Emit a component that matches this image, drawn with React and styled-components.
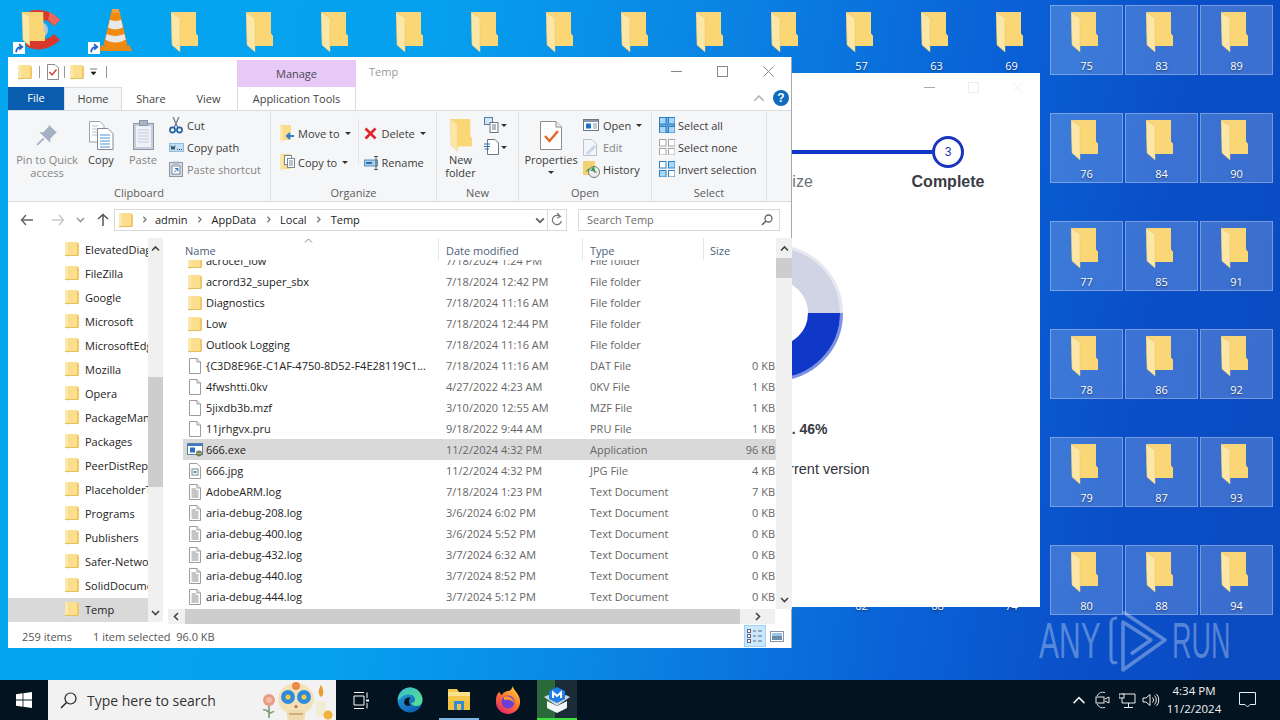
import React from 'react';
import styled, { createGlobalStyle } from 'styled-components';

const GlobalStyle = createGlobalStyle`
    html, body {
        margin: 0;
        padding: 0;
        background: #0a6ad0;
    }
    * {
        box-sizing: border-box;
    }
`;

const UI_FONT = `"Open Sans", "Noto Sans", sans-serif`;

const Screen = styled.div`
    width: 1280px;
    height: 720px;
    display: flex;
    flex-direction: column;
    overflow: hidden;
    font-family: ${UI_FONT};
    font-size: 11px;
`;

const Desktop = styled.div`
    position: relative;
    flex: 1;
    overflow: hidden;
    background: linear-gradient(99deg, #05a6f0 0%, #06a0ee 32%, #0a84e4 52%, #0a62d6 72%, #0a4fc8 86%, #0b4ac0 100%);
`;

/* desktop items sit on a free canvas */
const IconCell = styled.div`
    position: absolute;
    left: ${(p) => p.$x}px;
    top: ${(p) => p.$y}px;
    width: 73px;
    height: 70px;
    padding-top: 6px;
    display: flex;
    flex-direction: column;
    align-items: center;
    color: #fff;
    background: ${(p) => (p.$selected ? 'rgba(255, 255, 255, 0.2)' : 'transparent')};
    border: 1px solid ${(p) => (p.$selected ? 'rgba(255, 255, 255, 0.3)' : 'transparent')};
`;

const IconArt = styled.span`
    margin-right: 4px;
    line-height: 0;
`;

const IconLabel = styled.span`
    margin-top: 7px;
    line-height: 14px;
    font-size: 11px;
    text-shadow: 0 1px 2px rgba(0, 0, 0, 0.5);
`;

const CanvasIcon = styled.div`
    position: absolute;
    left: ${(p) => p.$x}px;
    top: ${(p) => p.$y}px;
    line-height: 0;
`;

/* installer window behind explorer */
const InstallerWindow = styled.div`
    position: absolute;
    left: 510px;
    top: 73px;
    width: 530px;
    height: 534px;
    background: #fff;
    display: flex;
    flex-direction: column;
    align-items: center;
    font-family: "Liberation Sans", Arial, sans-serif;
    color: #3b3b45;
`;

const InstallerTitle = styled.div`
    align-self: stretch;
    height: 28px;
    padding-right: 17px;
    display: flex;
    justify-content: flex-end;
    align-items: center;
    gap: 33px;
`;

const StepTrack = styled.div`
    margin-top: 35px;
    width: 378px;
    display: flex;
    align-items: center;
`;

const StepCircle = styled.div`
    width: 32px;
    height: 32px;
    border-radius: 50%;
    border: 3px solid #1936bd;
    color: #1936bd;
    display: flex;
    align-items: center;
    justify-content: center;
    font-size: 12px;
`;

const StepLine = styled.div`
    flex: 1;
    height: 4px;
    background: #0f37c8;
`;

const StepLabels = styled.div`
    margin-top: 4px;
    width: 519px;
    display: grid;
    grid-template-columns: repeat(3, 1fr);
`;

const StepLabel = styled.div`
    text-align: center;
    font-size: 16px;
    line-height: 20px;
    font-weight: ${(p) => (p.$active ? 700 : 400)};
    color: ${(p) => (p.$active ? '#3b3b45' : '#70707a')};
`;

const Donut = styled.svg`
    margin-top: 51px;
    display: block;
`;

const ProgressText = styled.div`
    margin-top: 36px;
    font-size: 14px;
    line-height: 20px;
    font-weight: 700;
`;

const StatusText = styled.div`
    margin-top: 20px;
    font-size: 14.5px;
    line-height: 20px;
    color: #33333b;
`;

/* explorer window */
const ExplorerWindow = styled.div`
    position: absolute;
    left: 8px;
    top: 57px;
    width: 784px;
    height: 591px;
    background: #fff;
    border-right: 1px solid #a8a8a8;
    display: flex;
    flex-direction: column;
    color: #333;
`;

const TitleBar = styled.div`
    height: 30px;
    display: flex;
    align-items: center;
    position: relative;
`;

const QuickBar = styled.div`
    width: 229px;
    padding-left: 10px;
    display: flex;
    align-items: center;
    height: 100%;
`;

const QuickSep = styled.div`
    width: 1px;
    height: 12px;
    background: #9a9a9a;
    margin: 0 ${(p) => p.$gap || 11}px;
`;

const QuickMenu = styled.svg`
    margin-left: 6px;
`;

const ManageTab = styled.div`
    width: 119px;
    height: 27px;
    margin-top: 3px;
    background: #e7c8f6;
    text-align: center;
    line-height: 28px;
    color: #4a4a55;
`;

const TitleText = styled.div`
    margin-left: 13px;
    margin-top: -1px;
    color: #9a9a9a;
`;

const WindowControls = styled.div`
    margin-left: auto;
    width: 138px;
    height: 100%;
    display: grid;
    grid-template-columns: 46px 46px 46px;
    align-items: center;
    justify-items: center;
    margin-top: -2px;
`;

const TabBar = styled.div`
    height: 23px;
    display: flex;
    align-items: stretch;
`;

const FileTab = styled.div`
    width: 56px;
    background: #0a5dae;
    color: #fff;
    text-align: center;
    line-height: 22px;
`;

const Tab = styled.div`
    width: ${(p) => p.$w}px;
    text-align: center;
    line-height: 22px;
    color: #444;
    background: ${(p) => (p.$active ? '#f5f6f7' : 'transparent')};
    border: 1px solid ${(p) => (p.$active ? '#dadbdc' : 'transparent')};
    border-bottom: none;
    border-left-color: ${(p) => (p.$edged ? '#dadbdc' : undefined)};
    border-right-color: ${(p) => (p.$edged ? '#dadbdc' : undefined)};
`;

const TabEnd = styled.div`
    margin-left: auto;
    width: 38px;
    display: flex;
    align-items: center;
    justify-content: space-between;
    padding: 0 1px 2px 0;
`;

const Ribbon = styled.div`
    height: 92px;
    background: #f5f6f7;
    border-top: 1px solid #dadbdc;
    border-bottom: 1px solid #dadbdc;
    display: flex;
`;

const Group = styled.div`
    width: ${(p) => p.$w}px;
    border-right: 1px solid #dfe1e3;
    display: flex;
    flex-direction: column;
    margin-top: 1px;
`;

const GroupBody = styled.div`
    flex: 1;
    display: flex;
    padding-left: ${(p) => p.$pl || 0}px;
`;

const GroupLabel = styled.div`
    height: 16px;
    text-align: center;
    line-height: 16px;
    color: #5c5c5c;
`;

const LargeButton = styled.div`
    width: ${(p) => p.$w}px;
    padding-top: 5px;
    display: flex;
    flex-direction: column;
    align-items: center;
    line-height: 13px;
    text-align: center;
    color: ${(p) => (p.$disabled ? '#858585' : '#3c3c3c')};
`;

const LargeIconBox = styled.div`
    height: 36px;
    display: flex;
    align-items: center;
    justify-content: center;
`;

const SmallColumn = styled.div`
    margin-left: ${(p) => p.$ml || 0}px;
    padding-top: ${(p) => p.$pt ?? 2}px;
    display: flex;
    flex-direction: column;
`;

const SmallButton = styled.div`
    height: ${(p) => p.$h || 22}px;
    display: flex;
    align-items: center;
    color: ${(p) => (p.$disabled ? '#858585' : '#3c3c3c')};
    white-space: nowrap;
`;

const SmallIconBox = styled.span`
    width: ${(p) => p.$w || 18}px;
    flex: none;
    display: flex;
    align-items: center;
`;

const Caret = styled.span`
    display: inline-block;
    margin-left: ${(p) => p.$ml ?? 5}px;
    margin-top: ${(p) => p.$mt ?? 0}px;
    border-left: 3px solid transparent;
    border-right: 3px solid transparent;
    border-top: 3px solid #333;
`;

const ColumnRule = styled.div`
    width: 1px;
    margin: 7px 5px 20px 7px;
    background: #e2e4e6;
`;

const AddressRow = styled.div`
    height: 36px;
    display: flex;
    align-items: center;
    padding-bottom: 1px;
`;

const NavArrows = styled.div`
    width: 106px;
    height: 100%;
    display: grid;
    grid-template-columns: 38px 23px 22px 23px;
    align-items: center;
    justify-items: center;
`;

const AddressBox = styled.div`
    width: 434px;
    height: 22px;
    border: 1px solid #d9d9d9;
    display: flex;
    align-items: center;
    padding-left: 4px;
    color: #222;
`;

const Crumb = styled.span`
    display: inline-block;
`;

const CrumbSep = styled.span`
    width: ${(p) => p.$w || 24}px;
    display: flex;
    justify-content: center;
`;

const AddressDrop = styled.span`
    margin-left: auto;
    margin-right: 2px;
    line-height: 0;
`;

const RefreshBox = styled.div`
    width: 19px;
    height: 22px;
    border: 1px solid #d9d9d9;
    border-left: none;
    display: flex;
    align-items: center;
    justify-content: center;
`;

const SearchBox = styled.div`
    margin-left: 11px;
    width: 202px;
    height: 22px;
    border: 1px solid #d9d9d9;
    padding: 0 6px 0 8px;
    display: flex;
    align-items: center;
    justify-content: space-between;
    color: #6d6d6d;
`;

const Body = styled.div`
    flex: 1;
    display: flex;
    min-height: 0;
`;

const NavPane = styled.div`
    width: 140px;
    height: 384px;
    overflow: hidden;
`;

const NavItem = styled.div`
    height: 24px;
    display: flex;
    align-items: center;
    padding: 0 0 2px 57px;
    gap: 6px;
    white-space: nowrap;
    color: #222;
    background: ${(p) => (p.$selected ? '#d9d9d9' : 'transparent')};

    svg {
        flex: none;
    }
`;

const VScroll = styled.div`
    width: ${(p) => p.$w}px;
    height: ${(p) => p.$h}px;
    background: #f0f0f0;
    display: flex;
    flex-direction: column;
    flex: none;
`;

const ScrollArrow = styled.div`
    height: ${(p) => p.$h || 20}px;
    display: flex;
    align-items: center;
    justify-content: center;
    flex: none;
    margin-top: ${(p) => (p.$end ? 'auto' : 0)};
`;

const ScrollThumb = styled.div`
    height: ${(p) => p.$h}px;
    margin-top: ${(p) => p.$top}px;
    background: #cdcdcd;
`;

const Content = styled.div`
    flex: 1;
    display: flex;
    flex-direction: column;
    min-width: 0;
`;

const ListRow = styled.div`
    display: flex;
    height: 371px;
`;

const ListPane = styled.div`
    width: 613px;
    display: flex;
    flex-direction: column;
`;

const HeaderRow = styled.div`
    height: 22px;
    display: grid;
    grid-template-columns: 276px 144px 121px 72px;
    position: relative;
    color: #4c6078;
    background: #fff;
    z-index: 1;
`;

const HeaderCell = styled.div`
    padding: 4px 0 0 ${(p) => p.$pl}px;
    border-right: 1px solid ${(p) => (p.$last ? 'transparent' : '#e5e5e5')};
    line-height: 18px;
`;

const SortMark = styled.span`
    position: absolute;
    left: 141px;
    top: -2px;
    line-height: 0;
`;

const FileList = styled.div`
    flex: 1;
    overflow: hidden;
    padding-left: 20px;
`;

const FileScroller = styled.div`
    margin-top: -10px;
`;

const FileRow = styled.div`
    height: 21px;
    display: grid;
    grid-template-columns: 263px 144px 114px 72px;
    align-items: center;
    white-space: nowrap;
    color: #666;
    background: ${(p) => (p.$selected ? '#d9d9d9' : 'transparent')};
`;

const NameCell = styled.div`
    display: flex;
    align-items: center;
    gap: 3px;
    padding-left: 4px;
    color: #222;
    overflow: hidden;
`;

const TypeIconBox = styled.span`
    width: 16px;
    display: flex;
    justify-content: center;
    flex: none;
`;

const SizeCell = styled.div`
    text-align: right;
    padding-right: 1px;
`;

const HScroll = styled.div`
    height: 15px;
    margin-left: 5px;
    margin-right: 16px;
    background: #f0f0f0;
    display: flex;
`;

const HArrow = styled.div`
    width: ${(p) => p.$w}px;
    display: flex;
    align-items: center;
    justify-content: center;
    flex: none;
`;

const HThumb = styled.div`
    flex: 1;
    background: #cdcdcd;
`;

const StatusBar = styled.div`
    height: 24px;
    display: flex;
    align-items: center;
    padding-left: 14px;
    color: #555;
`;

const StatusItem = styled.span`
    width: ${(p) => p.$w}px;
    white-space: pre;
`;

const ViewButtons = styled.div`
    margin-left: auto;
    height: 100%;
    display: flex;
    align-items: center;
    padding-right: 6px;
    gap: 3px;
`;

const ViewButton = styled.div`
    width: ${(p) => p.$w}px;
    height: 22px;
    display: flex;
    align-items: center;
    justify-content: center;
    background: ${(p) => (p.$active ? '#cce8ff' : 'transparent')};
    border: 1px solid ${(p) => (p.$active ? '#99d1ff' : 'transparent')};
`;

/* watermark */
const Watermark = styled.div`
    position: absolute;
    left: 1039px;
    top: 608px;
    width: 195px;
    height: 66px;
    color: rgba(255, 255, 255, 0.33);
`;

const MarkWord = styled.span`
    position: absolute;
    top: 0;
    left: ${(p) => p.$x}px;
    font-family: "Liberation Sans", Arial, sans-serif;
    font-size: 50px;
    line-height: 66px;
    transform-origin: left center;
    transform: scaleX(${(p) => p.$sx});
`;

const MarkLogo = styled.svg`
    position: absolute;
    left: 70px;
    top: 0;
`;

/* taskbar */
const Taskbar = styled.div`
    height: 40px;
    background: #03131f;
    display: flex;
    align-items: stretch;
    flex: none;
    color: #fff;
`;

const StartButton = styled.div`
    width: 48px;
    display: flex;
    align-items: center;
    justify-content: center;
`;

const TaskSearch = styled.div`
    width: 288px;
    background: #f2f2f2;
    display: flex;
    align-items: center;
    padding-left: 12px;
    color: #333;
    font-size: 14px;
    overflow: hidden;
`;

const SearchText = styled.span`
    margin-left: 10px;
`;

const SearchDoodle = styled.svg`
    margin-left: auto;
    flex: none;
`;

const TaskApps = styled.div`
    margin-left: 5px;
    display: flex;
    gap: 9px;
`;

const TaskApp = styled.div`
    width: 40px;
    display: flex;
    align-items: center;
    justify-content: center;
    background: ${(p) => (p.$bg ? p.$bg : 'transparent')};
    box-shadow: ${(p) => (p.$line ? `inset 0 -2px 0 ${p.$line}` : 'none')};
`;

const Tray = styled.div`
    margin-left: auto;
    display: flex;
    align-items: center;
    padding-right: 10px;
`;

const TrayIcon = styled.div`
    width: 24px;
    display: flex;
    justify-content: center;
`;

const Clock = styled.div`
    width: 62px;
    text-align: center;
    font-size: 11.5px;
    line-height: 18px;
    color: #f2f2f2;
`;

const NoticeBox = styled.div`
    width: 45px;
    display: flex;
    justify-content: center;
`;

/* drawings */
const Folder = ({ w = 27, h = 40 }) => (
    <svg width={w} height={h} viewBox="0 0 27 40">
        <path d="M0 0H25V21.5L27 24V34H8V6Z" fill="#f9d67a" />
        <path d="M9 6H25V21.5L27 24V34H9Z" fill="#fbd673" opacity="0.7" />
        <path d="M0 0L9 6V40L1 33Z" fill="#fce7a6" />
        <path d="M0 0L9 6V40L1 33Z" fill="none" stroke="#eac777" strokeWidth="0.5" />
    </svg>
);

const SmallFolder = () => (
    <svg width="14" height="16" viewBox="0 0 14 16">
        <path d="M0 1H12V14H0Z" fill="#fcdf8e" />
        <path d="M12 1V14H14V3Z" fill="#f0c869" />
        <path d="M0 1V15L3 16V1Z" fill="#fbe8ad" />
        <path d="M0 14.5H13.5" stroke="#e4bd5d" />
    </svg>
);

const DocIcon = ({ lines }) => (
    <svg width="12" height="16" viewBox="0 0 12 16">
        <path d="M.5.5H8L11.5 4V15.5H.5Z" fill="#fff" stroke="#9c9c9c" />
        <path d="M8 .5V4H11.5" fill="#eee" stroke="#9c9c9c" />
        {lines && <path d="M2.5 5H7M2.5 7H9.5M2.5 9H9.5M2.5 11H9.5M2.5 13H9.5" stroke="#8c8c8c" />}
    </svg>
);

const JpgIcon = () => (
    <svg width="12" height="16" viewBox="0 0 12 16">
        <path d="M.5.5H8L11.5 4V15.5H.5Z" fill="#fff" stroke="#9c9c9c" />
        <rect x="3" y="6" width="6" height="6" fill="#fff" stroke="#6f8c99" />
        <rect x="4.5" y="8" width="3" height="2" fill="#6f8c99" />
    </svg>
);

const ExeIcon = () => (
    <svg width="16" height="14" viewBox="0 0 16 14">
        <rect x=".5" y=".5" width="15" height="11" fill="#fff" stroke="#5f7f9f" />
        <rect x="1" y="1" width="14" height="2" fill="#3a78c8" />
        <rect x="3" y="4.5" width="5" height="5" fill="#2d6fc4" />
        <circle cx="12" cy="10.5" r="3" fill="#69806a" />
        <path d="M10 10.5H14" stroke="#d9b23c" />
    </svg>
);

const Chevron = ({ dir = 'up', size = 9, color = '#444', width = 1.6 }) => {
    const d = {
        up: 'M1 6.5L4.5 3L8 6.5',
        down: 'M1 3L4.5 6.5L8 3',
        left: 'M6 1L2.5 4.5L6 8',
        right: 'M3 1L6.5 4.5L3 8',
    }[dir];
    return (
        <svg width={size} height={size} viewBox="0 0 9 9">
            <path d={d} fill="none" stroke={color} strokeWidth={width} />
        </svg>
    );
};

const PinIcon = () => (
    <svg width="22" height="22" viewBox="0 0 20 20">
        <path d="M12 1L19 8L17 9L13 13.5L13 17L3 7.5L6.5 7.5L11 3Z" fill="#a4b1c4" />
        <path d="M7 13L1 19" stroke="#a4b1c4" strokeWidth="1.6" />
    </svg>
);

const CopyIcon = () => (
    <svg width="25" height="29" viewBox="0 0 25 29">
        <path d="M.5.5H11L15 4.5V21H.5Z" fill="#fff" stroke="#9aa3ad" />
        <path d="M3 5H9M3 8H12M3 11H12M3 14H12" stroke="#b9c0c8" />
        <path d="M8.5 7.5H19L24 12.5V28.5H8.5Z" fill="#fff" stroke="#7f8a96" />
        <path d="M11 14H21M11 17H21M11 20H21M11 23H21M11 26H21" stroke="#4f94d4" />
    </svg>
);

const PasteIcon = () => (
    <svg width="21" height="30" viewBox="0 0 21 30">
        <rect x=".5" y="3.5" width="20" height="26" fill="#c6cedb" stroke="#8b97a8" />
        <rect x="3" y="6" width="15" height="21" fill="#eef1f7" />
        <path d="M5 10H16M5 13H16M5 16H16M5 19H16M5 22H16" stroke="#c3cbdb" />
        <rect x="6.5" y=".5" width="8" height="5" fill="#aab4c4" stroke="#8b97a8" />
    </svg>
);

const CutIcon = () => (
    <svg width="14" height="17" viewBox="0 0 14 17">
        <path d="M4 0L9 11M10 0L5 11" stroke="#6d7a88" strokeWidth="1.3" />
        <circle cx="3.5" cy="13" r="2.6" fill="none" stroke="#1e5fa8" strokeWidth="1.6" />
        <circle cx="10.5" cy="13" r="2.6" fill="none" stroke="#1e5fa8" strokeWidth="1.6" />
    </svg>
);

const CopyPathIcon = () => (
    <svg width="15" height="9" viewBox="0 0 15 9">
        <rect x=".5" y=".5" width="14" height="8" fill="#bfe0f5" stroke="#93bcdc" />
        <path d="M2 2.5L3 6.5L4 3.5L5 6.5L6 2.5M8 6.5H9M10 6.5H11M12 6.5H13" fill="none" stroke="#345" />
    </svg>
);

const PasteShortcutIcon = () => (
    <svg width="14" height="16" viewBox="0 0 14 16">
        <rect x=".5" y="1.5" width="13" height="14" fill="#d5dbe5" stroke="#8b97a8" />
        <rect x="4" y=".5" width="6" height="3" fill="#aab4c4" />
        <rect x="3" y="5" width="8" height="8" fill="#fff" stroke="#7b8899" />
        <path d="M5.5 11L8.5 8M6 7.5H9V10.5" fill="none" stroke="#2b6cb0" />
    </svg>
);

const MoveToIcon = () => (
    <svg width="15" height="17" viewBox="0 0 15 17">
        <path d="M0 0H11V15H0Z" fill="#fbdc88" />
        <path d="M0 0L3 1.5V17L0 15Z" fill="#fbe8ad" />
        <path d="M14 11H7M10 8L7 11L10 14" fill="none" stroke="#2f7dd0" strokeWidth="2" />
    </svg>
);

const CopyToIcon = () => (
    <svg width="15" height="17" viewBox="0 0 15 17">
        <path d="M0 0H11V15H0Z" fill="#fbdc88" />
        <path d="M0 0L3 1.5V17L0 15Z" fill="#fbe8ad" />
        <rect x="4.5" y="1.5" width="7" height="9" fill="#fff" stroke="#7b8899" />
        <rect x="7.5" y="4.5" width="7" height="9" fill="#fff" stroke="#7b8899" />
        <path d="M9 7H13M9 9H13M9 11H13" stroke="#7b8899" />
    </svg>
);

const DeleteIcon = () => (
    <svg width="13" height="13" viewBox="0 0 13 13">
        <path d="M1.5 1.5L11.5 11.5M11.5 1.5L1.5 11.5" stroke="#e0242b" strokeWidth="2.6" />
    </svg>
);

const RenameIcon = () => (
    <svg width="16" height="14" viewBox="0 0 16 14">
        <rect x=".5" y="4" width="13" height="6" fill="#a9cdec" stroke="#5b8dbd" />
        <rect x="2" y="6" width="6" height="2" fill="#2f6cad" />
        <path d="M10 .5H14M12 .5V13.5M10 13.5H14" stroke="#555" fill="none" />
    </svg>
);

const NewItemIcon = ({ kind }) => (
    <svg width="15" height="16" viewBox="0 0 15 16">
        {kind === 'copy' ? (
            <>
                <rect x=".5" y=".5" width="8" height="7" fill="#d5e6f5" stroke="#4d7ea8" />
                <rect x="6" y="5.5" width="8" height="10" fill="#fff" stroke="#6a7785" />
                <path d="M8 8H12M8 10H12M8 12H12" stroke="#6a7785" />
            </>
        ) : (
            <>
                <path d="M3.5.5H11L14.5 4V15.5H3.5Z" fill="#fff" stroke="#6a7785" />
                <path d="M0 5H6M0 7.5H6M1 10H5" stroke="#2e73b8" strokeWidth="1.2" />
            </>
        )}
    </svg>
);

const PropertiesIcon = () => (
    <svg width="22" height="29" viewBox="0 0 22 29">
        <path d="M.5.5H16L21.5 6V28.5H.5Z" fill="#fff" stroke="#8c8c8c" />
        <path d="M16 .5V6H21.5" fill="#f0f0f0" stroke="#8c8c8c" />
        <path d="M5 15L9.5 20L18 10" fill="none" stroke="#e0662a" strokeWidth="2.4" />
    </svg>
);

const OpenIcon = () => (
    <svg width="16" height="12" viewBox="0 0 16 12">
        <rect x=".5" y=".5" width="15" height="11" fill="#fff" stroke="#6a7785" />
        <rect x="1" y="1" width="14" height="2" fill="#8b97a8" />
        <rect x="3" y="4.5" width="5" height="5" fill="#1f6fc4" />
        <path d="M10 5H14M10 7H14M10 9H14" stroke="#8b97a8" />
    </svg>
);

const EditIcon = () => (
    <svg width="15" height="17" viewBox="0 0 15 17">
        <path d="M.5.5H9L13.5 5V16.5H.5Z" fill="#f2f5fa" stroke="#b8c2d0" />
        <path d="M3 14L11 6L13 8L5 16Z" fill="#c8d6e8" />
    </svg>
);

const HistoryIcon = () => (
    <svg width="17" height="17" viewBox="0 0 17 17">
        <rect x="0" y="0" width="12" height="14" fill="#f3d36f" />
        <circle cx="11" cy="11" r="5.5" fill="#eee" stroke="#777" />
        <path d="M11 8V11H13.5" fill="none" stroke="#555" />
        <path d="M3 11A4 4 0 0 1 9 8L7 10L12 10L11 5L9 7" fill="#35a043" />
    </svg>
);

const SelectIcon = ({ kind }) => {
    const filled = { all: [1, 1, 1, 1], none: [0, 0, 0, 0], invert: [0, 1, 1, 0] }[kind];
    const cells = [[0, 0], [9, 0], [0, 9], [9, 9]];
    return (
        <svg width="16" height="16" viewBox="0 0 16 16">
            {kind === 'all' && <rect x=".5" y=".5" width="15" height="15" fill="#a8d6f7" stroke="#2f7fc4" />}
            {cells.map(([x, y], i) => (
                <rect
                    key={i}
                    x={x + 0.5}
                    y={y + 0.5}
                    width="6.5"
                    height="6.5"
                    fill={filled[i] ? '#a8d6f7' : '#fff'}
                    stroke={kind === 'none' ? '#a6a6a6' : '#2f7fc4'}
                />
            ))}
            {kind === 'all' && <path d="M8 1V15M1 8H15" stroke="#2f7fc4" />}
        </svg>
    );
};

const PropsQuickIcon = () => (
    <svg width="12" height="16" viewBox="0 0 12 16">
        <path d="M.5.5H8L11.5 4V15.5H.5Z" fill="#fff" stroke="#8c8c8c" />
        <path d="M2.5 8L5 11L9.5 5.5" fill="none" stroke="#d8392b" strokeWidth="1.4" />
    </svg>
);

const CCleanerIcon = () => (
    <svg width="42" height="42" viewBox="0 0 42 42">
        <circle cx="20" cy="21" r="8" fill="#b9c6d2" />
        <path d="M8 3C18 -1 30 1 40 11L34 17C28 10 20 9 14 12L8 30C16 33 28 32 34 25L40 31C30 41 16 43 6 37Z" fill="#d8382c" />
        <path d="M30 3C34 5 37 8 40 11L34 17C32 14 30 12 28 11Z" fill="#e9695c" />
    </svg>
);

const VlcIcon = () => (
    <svg width="33" height="44" viewBox="0 0 42 46" preserveAspectRatio="none">
        <path d="M3 39H39L42 45H0Z" fill="#e88a16" />
        <path d="M16 3L26 3L36 38C30 43 12 43 6 38Z" fill="#f28a10" />
        <path d="M14 12C18 14 24 14 28 12L30.5 20C25 23 17 23 11.5 20Z" fill="#e8e8e8" />
        <path d="M10 27C16 30 26 30 32 27L34 33C27 37 15 37 8 33Z" fill="#e8e8e8" />
        <path d="M17 1H25L26 5H16Z" fill="#f6a23c" />
    </svg>
);

const ShortcutBadge = () => (
    <svg width="12" height="12" viewBox="0 0 11 11">
        <rect width="11" height="11" fill="#fff" />
        <path d="M3 9.5C3 6 5 4.5 7 4.5M5.5 2L8.5 4.5L5.5 7" fill="none" stroke="#1c62c8" strokeWidth="1.6" />
    </svg>
);

const WindowsLogo = () => (
    <svg width="16" height="16" viewBox="0 0 16 16">
        <path d="M0 2.2L6.6 1.3V7.6H0ZM7.4 1.2L16 0V7.6H7.4ZM0 8.4H6.6V14.7L0 13.8ZM7.4 8.4H16V16L7.4 14.8Z" fill="#fff" />
    </svg>
);

const SearchGlass = () => (
    <svg width="17" height="17" viewBox="0 0 17 17">
        <circle cx="10.5" cy="6.5" r="5.5" fill="none" stroke="#222" strokeWidth="1.2" />
        <path d="M6.5 10.5L1 16" stroke="#222" strokeWidth="1.4" />
    </svg>
);

const Doodle = () => (
    <SearchDoodle width="76" height="40" viewBox="0 0 76 40">
        <path d="M9 24V38M9 32C6 30 4 29 3 30M9 34C12 32 13 31 14 32" stroke="#7d9a72" strokeWidth="1.6" fill="none" />
        <circle cx="9" cy="20" r="6" fill="#e89a84" />
        <circle cx="9" cy="20" r="3" fill="#f4bba8" />
        <ellipse cx="36" cy="19" rx="18" ry="16" fill="#f3e2b8" />
        <rect x="27" y="30" width="18" height="10" rx="3" fill="#eedcb0" />
        <circle cx="28" cy="17" r="7" fill="#2e8bdc" />
        <circle cx="44" cy="17" r="7" fill="#2e8bdc" />
        <circle cx="28" cy="17" r="2.6" fill="#f2c744" />
        <circle cx="44" cy="17" r="2.6" fill="#f2c744" />
        <circle cx="36" cy="6" r="4" fill="#ea8a46" />
        <path d="M35 25H37L38 28H34Z" fill="#c77b5e" />
        <path d="M29 34H43" stroke="#c79a66" strokeWidth="1.4" />
        <rect x="56" y="21" width="10" height="16" rx="1" fill="#f3ecd4" />
        <path d="M61 5C64 10 64 15 61 17C58 15 58 10 61 5Z" fill="#ec9a2e" />
        <circle cx="68" cy="35" r="4.5" fill="#efb23a" />
    </SearchDoodle>
);

const TaskViewIcon = () => (
    <svg width="17" height="17" viewBox="0 0 17 17">
        <path d="M1 .5H11M1 16.5H11M1 4H11V13H1ZM14 .5V6M14 11V16.5" fill="none" stroke="#fff" />
        <rect x="13" y="7.5" width="3" height="2" fill="#fff" />
    </svg>
);

const EdgeIcon = () => (
    <svg width="26" height="26" viewBox="0 0 24 24">
        <defs>
            <linearGradient id="edgeBlue" x1="0" y1="0" x2="0.7" y2="1">
                <stop offset="0" stopColor="#2ba8e0" />
                <stop offset="1" stopColor="#0a5fb0" />
            </linearGradient>
            <linearGradient id="edgeGreen" x1="0" y1="0" x2="1" y2="1">
                <stop offset="0" stopColor="#37c0c8" />
                <stop offset="1" stopColor="#5fe08c" />
            </linearGradient>
        </defs>
        <circle cx="12" cy="12" r="11.5" fill="url(#edgeBlue)" />
        <path d="M12 .5A11.5 11.5 0 0 1 23.5 12C23.5 16 20 18 17 17.5C14 17 13 15.5 13.5 14.5C16 14.5 17 12.5 16.5 10.5C15.5 7 12 6.5 9.5 7C6 7.5 2.5 10 1 13C.5 6 6 .5 12 .5Z" fill="url(#edgeGreen)" />
        <path d="M6.5 14C7 10 10.5 9 12.5 10C11 11.5 10.5 14.5 12.5 17C9.5 18 7 17 6.5 14Z" fill="#03131f" />
    </svg>
);

const ExplorerIcon = () => (
    <svg width="24" height="22" viewBox="0 0 24 22">
        <path d="M1 0H10L12 3H23V20H1Z" fill="#f5c84c" />
        <rect x="1" y="3" width="22" height="4" fill="#f9e08c" />
        <rect x="1" y="12" width="22" height="9" fill="#f0c040" />
        <path d="M7 12H17V21H14V15H10V21H7Z" fill="#2f8ad8" />
    </svg>
);

const FirefoxIcon = () => (
    <svg width="26" height="28" viewBox="0 0 26 28">
        <defs>
            <linearGradient id="foxBody" x1="0.8" y1="0" x2="0.2" y2="1">
                <stop offset="0" stopColor="#ffd23c" />
                <stop offset="0.45" stopColor="#ff7a2e" />
                <stop offset="1" stopColor="#e0226a" />
            </linearGradient>
        </defs>
        <path d="M18 0C18 4 24 7 25 14C26 22 20 28 13 28C6 28 0 22 1 14C1 10 3 6 5 6C5 8 6 9 7 9C8 6 12 5 13 5C15 5 17 3 18 0Z" fill="url(#foxBody)" />
        <circle cx="13" cy="16" r="6.5" fill="#6a3fd4" />
        <path d="M9 11C13 9 19 12 19 17C17 14 13 13 9 14Z" fill="#ff9a2e" />
    </svg>
);

const BoxAppIcon = () => (
    <svg width="26" height="26" viewBox="0 0 26 26">
        <path d="M3 14L13 19L23 14V21L13 26L3 21Z" fill="#f2f4f6" />
        <path d="M0 10L4 8L13 13L22 8L26 10L13 19Z" fill="#cfd6dc" />
        <path d="M13 0L21 4V12L13 16L5 12V4Z" fill="#1f7ee8" />
        <path d="M9 11V5.5L13 9L17 5.5V11" fill="none" stroke="#fff" strokeWidth="2" />
    </svg>
);

const MeetIcon = () => (
    <svg width="16" height="18" viewBox="0 0 16 18">
        <path d="M2 5A7 7 0 0 1 10 1.5M2 13A7 7 0 0 0 10 16.5" fill="none" stroke="#ddd" />
        <rect x="1" y="6" width="8" height="6" fill="none" stroke="#eee" />
        <path d="M10 8L14 6V12L10 10" fill="none" stroke="#eee" />
    </svg>
);

const NetworkIcon = () => (
    <svg width="17" height="15" viewBox="0 0 17 15">
        <path d="M3 1H16V10H3ZM9.5 10V14M5 14.5H14" fill="none" stroke="#eee" />
        <rect x="0" y="1" width="5" height="4" fill="#03131f" stroke="#eee" />
    </svg>
);

const SoundIcon = () => (
    <svg width="18" height="14" viewBox="0 0 18 14">
        <path d="M1 5H4L8 1.5V12.5L4 9H1Z" fill="none" stroke="#eee" />
        <path d="M10.5 4.5A3.5 3.5 0 0 1 10.5 9.5M12.5 2.5A6.5 6.5 0 0 1 12.5 11.5M14.5 1A9 9 0 0 1 14.5 13" fill="none" stroke="#eee" />
    </svg>
);

const NoticeIcon = () => (
    <svg width="17" height="16" viewBox="0 0 17 16">
        <path d="M.5.5H16.5V12.5H11L8.5 15L6 12.5H.5Z" fill="none" stroke="#eee" />
    </svg>
);

const topColumns = Array.from({ length: 12 }, (_, i) => ({ x: 150 + i * 75, label: String(3 + i * 6) }));

/* last row of the underlying columns, only its labels peek out below the installer */
const peekColumns = [
    { x: 825, label: '62' },
    { x: 901, label: '68' },
    { x: 975, label: '74' },
];

const selectedIcons = [
    [1050, [75, 76, 77, 78, 79, 80]],
    [1125, [83, 84, 85, 86, 87, 88]],
    [1200, [89, 90, 91, 92, 93, 94]],
];

const navFolders = [
    'ElevatedDiagnostics', 'FileZilla', 'Google', 'Microsoft', 'MicrosoftEdgeBackups', 'Mozilla', 'Opera',
    'PackageManagement', 'Packages', 'PeerDistRepub', 'PlaceholderTileLogo', 'Programs', 'Publishers',
    'Safer-Networking', 'SolidDocuments', 'Temp',
];

const files = [
    { name: 'acrocef_low', date: '7/18/2024 1:24 PM', type: 'File folder', kind: 'folder' },
    { name: 'acrord32_super_sbx', date: '7/18/2024 12:42 PM', type: 'File folder', kind: 'folder' },
    { name: 'Diagnostics', date: '7/18/2024 11:16 AM', type: 'File folder', kind: 'folder' },
    { name: 'Low', date: '7/18/2024 12:44 PM', type: 'File folder', kind: 'folder' },
    { name: 'Outlook Logging', date: '7/18/2024 11:16 AM', type: 'File folder', kind: 'folder' },
    { name: '{C3D8E96E-C1AF-4750-8D52-F4E28119C1...', date: '7/18/2024 11:16 AM', type: 'DAT File', size: '0 KB', kind: 'doc' },
    { name: '4fwshtti.0kv', date: '4/27/2022 4:23 AM', type: '0KV File', size: '1 KB', kind: 'doc' },
    { name: '5jixdb3b.mzf', date: '3/10/2020 12:55 AM', type: 'MZF File', size: '1 KB', kind: 'doc' },
    { name: '11jrhgvx.pru', date: '9/18/2022 9:44 AM', type: 'PRU File', size: '1 KB', kind: 'doc' },
    { name: '666.exe', date: '11/2/2024 4:32 PM', type: 'Application', size: '96 KB', kind: 'exe', selected: true },
    { name: '666.jpg', date: '11/2/2024 4:32 PM', type: 'JPG File', size: '4 KB', kind: 'jpg' },
    { name: 'AdobeARM.log', date: '7/18/2024 1:23 PM', type: 'Text Document', size: '7 KB', kind: 'log' },
    { name: 'aria-debug-208.log', date: '3/6/2024 6:02 PM', type: 'Text Document', size: '0 KB', kind: 'log' },
    { name: 'aria-debug-400.log', date: '3/6/2024 5:52 PM', type: 'Text Document', size: '0 KB', kind: 'log' },
    { name: 'aria-debug-432.log', date: '3/7/2024 6:32 AM', type: 'Text Document', size: '0 KB', kind: 'log' },
    { name: 'aria-debug-440.log', date: '3/7/2024 8:52 PM', type: 'Text Document', size: '0 KB', kind: 'log' },
    { name: 'aria-debug-444.log', date: '3/7/2024 5:12 PM', type: 'Text Document', size: '0 KB', kind: 'log' },
];

const fileIcon = (kind) => {
    if (kind === 'folder') return <SmallFolder />;
    if (kind === 'exe') return <ExeIcon />;
    if (kind === 'jpg') return <JpgIcon />;
    return <DocIcon lines={kind === 'log'} />;
};

const Ribbons = () => (
    <Ribbon>
        <Group $w={263}>
            <GroupBody $pl={8}>
                <LargeButton $w={62} $disabled>
                    <LargeIconBox><PinIcon /></LargeIconBox>
                    Pin to Quick<br />access
                </LargeButton>
                <LargeButton $w={46}>
                    <LargeIconBox><CopyIcon /></LargeIconBox>
                    Copy
                </LargeButton>
                <LargeButton $w={38} $disabled>
                    <LargeIconBox><PasteIcon /></LargeIconBox>
                    Paste
                </LargeButton>
                <SmallColumn $ml={7}>
                    <SmallButton><SmallIconBox><CutIcon /></SmallIconBox>Cut</SmallButton>
                    <SmallButton><SmallIconBox><CopyPathIcon /></SmallIconBox>Copy path</SmallButton>
                    <SmallButton $disabled><SmallIconBox><PasteShortcutIcon /></SmallIconBox>Paste shortcut</SmallButton>
                </SmallColumn>
            </GroupBody>
            <GroupLabel>Clipboard</GroupLabel>
        </Group>
        <Group $w={166}>
            <GroupBody $pl={9}>
                <SmallColumn $pt={7}>
                    <SmallButton $h={29}><SmallIconBox><MoveToIcon /></SmallIconBox>Move to<Caret /></SmallButton>
                    <SmallButton $h={29}><SmallIconBox><CopyToIcon /></SmallIconBox>Copy to<Caret /></SmallButton>
                </SmallColumn>
                <ColumnRule />
                <SmallColumn $pt={7}>
                    <SmallButton $h={29}><SmallIconBox><DeleteIcon /></SmallIconBox>Delete<Caret /></SmallButton>
                    <SmallButton $h={29}><SmallIconBox><RenameIcon /></SmallIconBox>Rename</SmallButton>
                </SmallColumn>
            </GroupBody>
            <GroupLabel>Organize</GroupLabel>
        </Group>
        <Group $w={82}>
            <GroupBody>
                <LargeButton $w={47}>
                    <LargeIconBox><Folder w={22} h={32} /></LargeIconBox>
                    New<br />folder
                </LargeButton>
                <SmallColumn>
                    <SmallButton><NewItemIcon kind="copy" /><Caret $ml={2} /></SmallButton>
                    <SmallButton><NewItemIcon kind="new" /><Caret $ml={2} /></SmallButton>
                </SmallColumn>
            </GroupBody>
            <GroupLabel>New</GroupLabel>
        </Group>
        <Group $w={133}>
            <GroupBody>
                <LargeButton $w={64}>
                    <LargeIconBox><PropertiesIcon /></LargeIconBox>
                    Properties
                    <Caret $ml={0} $mt={5} />
                </LargeButton>
                <SmallColumn>
                    <SmallButton><SmallIconBox $w={20}><OpenIcon /></SmallIconBox>Open<Caret /></SmallButton>
                    <SmallButton $disabled><SmallIconBox $w={20}><EditIcon /></SmallIconBox>Edit</SmallButton>
                    <SmallButton><SmallIconBox $w={20}><HistoryIcon /></SmallIconBox>History</SmallButton>
                </SmallColumn>
            </GroupBody>
            <GroupLabel>Open</GroupLabel>
        </Group>
        <Group $w={115}>
            <GroupBody $pl={7}>
                <SmallColumn>
                    <SmallButton><SmallIconBox $w={19}><SelectIcon kind="all" /></SmallIconBox>Select all</SmallButton>
                    <SmallButton><SmallIconBox $w={19}><SelectIcon kind="none" /></SmallIconBox>Select none</SmallButton>
                    <SmallButton><SmallIconBox $w={19}><SelectIcon kind="invert" /></SmallIconBox>Invert selection</SmallButton>
                </SmallColumn>
            </GroupBody>
            <GroupLabel>Select</GroupLabel>
        </Group>
    </Ribbon>
);

const Explorer = () => (
    <ExplorerWindow>
        <TitleBar>
            <QuickBar>
                <SmallFolder />
                <QuickSep $gap={7} />
                <PropsQuickIcon />
                <QuickSep $gap={5} />
                <SmallFolder />
                <QuickMenu width="8" height="8" viewBox="0 0 8 8">
                    <path d="M0 1H7M1 4H6L3.5 7Z" fill="#222" stroke="#222" strokeWidth="0.6" />
                </QuickMenu>
                <QuickSep $gap={8} />
            </QuickBar>
            <ManageTab>Manage</ManageTab>
            <TitleText>Temp</TitleText>
            <WindowControls>
                <svg width="11" height="11" viewBox="0 0 11 11"><path d="M0 5.5H11" stroke="#888" /></svg>
                <svg width="11" height="11" viewBox="0 0 11 11"><rect x=".5" y=".5" width="10" height="10" fill="none" stroke="#888" /></svg>
                <svg width="11" height="11" viewBox="0 0 11 11"><path d="M.5.5L10.5 10.5M10.5.5L.5 10.5" stroke="#888" /></svg>
            </WindowControls>
        </TitleBar>
        <TabBar>
            <FileTab>File</FileTab>
            <Tab $w={58} $active>Home</Tab>
            <Tab $w={58}>Share</Tab>
            <Tab $w={57}>View</Tab>
            <Tab $w={119} $edged>Application Tools</Tab>
            <TabEnd>
                <Chevron dir="up" size={12} color="#aaa" width={1} />
                <svg width="18" height="18" viewBox="0 0 18 18">
                    <circle cx="9" cy="9" r="8" fill="#0f6cbd" />
                    <text x="9" y="13" fontSize="12" fontWeight="700" textAnchor="middle" fill="#fff" fontFamily="Liberation Sans">?</text>
                </svg>
            </TabEnd>
        </TabBar>
        <Ribbons />
        <AddressRow>
            <NavArrows>
                <svg width="14" height="12" viewBox="0 0 14 12"><path d="M13 6H2M6 1L1.5 6L6 11" fill="none" stroke="#666" strokeWidth="1.5" /></svg>
                <svg width="14" height="12" viewBox="0 0 14 12"><path d="M1 6H12M8 1L12.5 6L8 11" fill="none" stroke="#c9c9c9" strokeWidth="1.5" /></svg>
                <Chevron dir="down" color="#999" />
                <svg width="12" height="14" viewBox="0 0 12 14"><path d="M6 13V2M1 6L6 1.5L11 6" fill="none" stroke="#555" strokeWidth="1.5" /></svg>
            </NavArrows>
            <AddressBox>
                <SmallFolder />
                <CrumbSep $w={22}><Chevron dir="right" size={7} color="#777" /></CrumbSep>
                <Crumb>admin</Crumb>
                <CrumbSep><Chevron dir="right" size={7} color="#777" /></CrumbSep>
                <Crumb>AppData</Crumb>
                <CrumbSep><Chevron dir="right" size={7} color="#777" /></CrumbSep>
                <Crumb>Local</Crumb>
                <CrumbSep><Chevron dir="right" size={7} color="#777" /></CrumbSep>
                <Crumb>Temp</Crumb>
                <AddressDrop><Chevron dir="down" size={10} color="#666" /></AddressDrop>
            </AddressBox>
            <RefreshBox>
                <svg width="12" height="13" viewBox="0 0 12 13"><path d="M9.5 4A4.6 4.6 0 1 0 10.5 8M6 0L9.5 3.5L6 5" fill="none" stroke="#777" strokeWidth="1.2" /></svg>
            </RefreshBox>
            <SearchBox>
                Search Temp
                <svg width="12" height="12" viewBox="0 0 12 12"><circle cx="7.5" cy="4.5" r="3.5" fill="none" stroke="#666" strokeWidth="1.3" /><path d="M5 7L1 11" stroke="#666" strokeWidth="1.6" /></svg>
            </SearchBox>
        </AddressRow>
        <Body>
            <NavPane>
                {navFolders.map((name) => (
                    <NavItem key={name} $selected={name === 'Temp'}>
                        <SmallFolder />
                        {name}
                    </NavItem>
                ))}
            </NavPane>
            <VScroll $w={15} $h={384}>
                <ScrollArrow><Chevron dir="up" /></ScrollArrow>
                <ScrollThumb $top={119} $h={110} />
                <ScrollArrow $end><Chevron dir="down" /></ScrollArrow>
            </VScroll>
            <Content>
                <ListRow>
                    <ListPane>
                        <HeaderRow>
                            <HeaderCell $pl={22}>Name</HeaderCell>
                            <HeaderCell $pl={7}>Date modified</HeaderCell>
                            <HeaderCell $pl={7}>Type</HeaderCell>
                            <HeaderCell $pl={6} $last>Size</HeaderCell>
                            <SortMark><Chevron dir="up" color="#888" width={1} /></SortMark>
                        </HeaderRow>
                        <FileList>
                            <FileScroller>
                                {files.map((file) => (
                                    <FileRow key={file.name} $selected={file.selected}>
                                        <NameCell>
                                            <TypeIconBox>{fileIcon(file.kind)}</TypeIconBox>
                                            {file.name}
                                        </NameCell>
                                        <div>{file.date}</div>
                                        <div>{file.type}</div>
                                        <SizeCell>{file.size}</SizeCell>
                                    </FileRow>
                                ))}
                            </FileScroller>
                        </FileList>
                    </ListPane>
                    <VScroll $w={16} $h={371}>
                        <ScrollArrow><Chevron dir="up" /></ScrollArrow>
                        <ScrollThumb $top={0} $h={20} />
                        <ScrollArrow $end><Chevron dir="down" /></ScrollArrow>
                    </VScroll>
                </ListRow>
                <HScroll>
                    <HArrow $w={17}><Chevron dir="left" /></HArrow>
                    <HThumb />
                    <HArrow $w={35}><Chevron dir="right" /></HArrow>
                </HScroll>
            </Content>
        </Body>
        <StatusBar>
            <StatusItem $w={71}>259 items</StatusItem>
            <StatusItem $w={200}>{'1 item selected  96.0 KB'}</StatusItem>
            <ViewButtons>
                <ViewButton $w={22} $active>
                    <svg width="16" height="14" viewBox="0 0 16 14">
                        <rect x=".5" y=".5" width="3" height="3" fill="#fff" stroke="#667" />
                        <rect x=".5" y="5.5" width="3" height="3" fill="#fff" stroke="#667" />
                        <rect x=".5" y="10.5" width="3" height="3" fill="#fff" stroke="#667" />
                        <path d="M6 2H9M11 2H15M6 7H9M11 7H15M6 12H9M11 12H15" stroke="#667" />
                    </svg>
                </ViewButton>
                <ViewButton $w={16}>
                    <svg width="14" height="11" viewBox="0 0 14 11">
                        <rect x=".5" y=".5" width="13" height="10" fill="#fff" stroke="#8894a5" />
                        <rect x="2" y="2" width="10" height="3" fill="#9cc4e6" />
                        <rect x="2" y="5" width="10" height="4" fill="#6b8aa8" />
                    </svg>
                </ViewButton>
            </ViewButtons>
        </StatusBar>
    </ExplorerWindow>
);

const Installer = () => (
    <InstallerWindow>
        <InstallerTitle>
            <svg width="11" height="11" viewBox="0 0 11 11"><path d="M0 5.5H11" stroke="#aaa" /></svg>
            <svg width="11" height="11" viewBox="0 0 11 11"><rect x=".5" y=".5" width="10" height="10" fill="none" stroke="#eee" /></svg>
            <svg width="11" height="11" viewBox="0 0 11 11"><path d="M.5.5L10.5 10.5M10.5.5L.5 10.5" stroke="#eee" /></svg>
        </InstallerTitle>
        <StepTrack>
            <StepCircle>1</StepCircle>
            <StepLine />
            <StepCircle>2</StepCircle>
            <StepLine />
            <StepCircle>3</StepCircle>
        </StepTrack>
        <StepLabels>
            <StepLabel>Prepare</StepLabel>
            <StepLabel>Customize</StepLabel>
            <StepLabel $active>Complete</StepLabel>
        </StepLabels>
        <Donut width="140" height="140" viewBox="0 0 140 140">
            <circle cx="70" cy="70" r="66.5" fill="none" stroke="#e6e7f1" strokeWidth="3" />
            <circle cx="70" cy="70" r="49" fill="none" stroke="#d1d4e4" strokeWidth="32" />
            <circle cx="70" cy="70" r="66.5" fill="none" stroke="#7d90e2" strokeWidth="3" strokeDasharray="192.2 417.8" />
            <circle cx="70" cy="70" r="49" fill="none" stroke="#0f37c8" strokeWidth="32" strokeDasharray="141.6 166.3" />
        </Donut>
        <ProgressText>Installing... 46%</ProgressText>
        <StatusText>Removing the current version</StatusText>
    </InstallerWindow>
);

export default function App() {
    return (
        <Screen>
            <GlobalStyle />
            <Desktop>
                <CanvasIcon $x={20} $y={9}><CCleanerIcon /></CanvasIcon>
                <CanvasIcon $x={20} $y={12}><Folder w={27} h={34} /></CanvasIcon>
                <CanvasIcon $x={13} $y={42}><ShortcutBadge /></CanvasIcon>
                <CanvasIcon $x={99} $y={8}><VlcIcon /></CanvasIcon>
                <CanvasIcon $x={88} $y={42}><ShortcutBadge /></CanvasIcon>
                {topColumns.map((col) => (
                    <IconCell key={col.x} $x={col.x} $y={5}>
                        <IconArt><Folder /></IconArt>
                        <IconLabel>{col.label}</IconLabel>
                    </IconCell>
                ))}
                {peekColumns.map((col) => (
                    <IconCell key={col.label} $x={col.x} $y={545}>
                        <IconArt><Folder /></IconArt>
                        <IconLabel>{col.label}</IconLabel>
                    </IconCell>
                ))}
                <Installer />
                {selectedIcons.map(([x, labels]) =>
                    labels.map((label, row) => (
                        <IconCell key={label} $x={x} $y={5 + row * 108} $selected>
                            <IconArt><Folder /></IconArt>
                            <IconLabel>{label}</IconLabel>
                        </IconCell>
                    )),
                )}
                <Explorer />
                <Watermark>
                    <MarkWord $x={0} $sx={0.6}>ANY</MarkWord>
                    <MarkLogo width="60" height="66" viewBox="0 0 60 66">
                        <path d="M8 10C3 10 2 12 2 16V50C2 54 4 56 8 54" fill="none" stroke="currentColor" strokeWidth="3" />
                        <path d="M14 4L56 32L14 62V14L42 32L22 46" fill="none" stroke="currentColor" strokeWidth="3.5" strokeLinejoin="round" />
                    </MarkLogo>
                    <MarkWord $x={133} $sx={0.54}>RUN</MarkWord>
                </Watermark>
            </Desktop>
            <Taskbar>
                <StartButton><WindowsLogo /></StartButton>
                <TaskSearch>
                    <SearchGlass />
                    <SearchText>Type here to search</SearchText>
                    <Doodle />
                </TaskSearch>
                <TaskApps>
                    <TaskApp><TaskViewIcon /></TaskApp>
                    <TaskApp><EdgeIcon /></TaskApp>
                    <TaskApp $line="#7db4e6"><ExplorerIcon /></TaskApp>
                    <TaskApp><FirefoxIcon /></TaskApp>
                    <TaskApp $bg="linear-gradient(90deg, #2a6a3a 45%, #1b2c38 45%)" $line="#3ee03e"><BoxAppIcon /></TaskApp>
                </TaskApps>
                <Tray>
                    <TrayIcon><Chevron dir="up" size={14} color="#eee" width={1} /></TrayIcon>
                    <TrayIcon><MeetIcon /></TrayIcon>
                    <TrayIcon><NetworkIcon /></TrayIcon>
                    <TrayIcon><SoundIcon /></TrayIcon>
                    <Clock>4:34 PM<br />11/2/2024</Clock>
                    <NoticeBox><NoticeIcon /></NoticeBox>
                </Tray>
            </Taskbar>
        </Screen>
    );
}
